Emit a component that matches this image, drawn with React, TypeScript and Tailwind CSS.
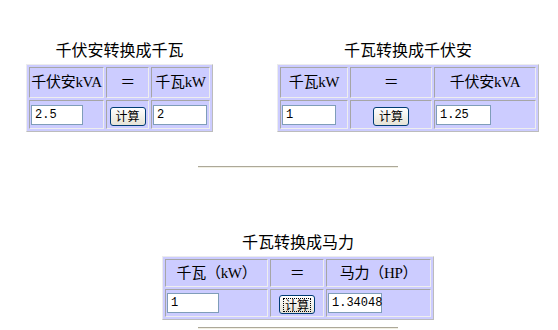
import React from 'react'

type Conv = {
  title: string
  left: string
  right: string
  a: string
  b: string
  table: string
  cols: [string, string, string]
  head: string
  row: string
  inA: string
  inB: string
  focused?: boolean
}

const serifCjk = 'font-["Liberation_Serif","Noto_Sans_CJK_SC",serif]'

function Btn({ focused }: { focused?: boolean }) {
  return (
    <button className='inline-flex h-[19px] w-[36px] items-center justify-center rounded-[3px] border border-[#003c74] bg-gradient-to-b from-white to-[#e6e3d6] align-middle font-["Noto_Sans_CJK_SC",sans-serif] text-[12px] leading-none text-black'>
      <span className={focused ? 'px-[1px] outline outline-1 outline-dotted outline-black' : ''}>计算</span>
    </button>
  )
}

function Field({ value, w }: { value: string; w: string }) {
  return (
    <div
      className={`flex h-[20px] items-center border border-[#7f9db9] bg-white pl-[3px] font-["Liberation_Mono","DejaVu_Sans_Mono",monospace] text-[12px] text-black ${w}`}
    >
      {value}
    </div>
  )
}

function Converter({ c }: { c: Conv }) {
  const cell = 'border border-t-[#a6a6a6] border-l-[#a6a6a6] border-b-[#eeeeee] border-r-[#eeeeee] p-[1px]'
  const head = `${cell} overflow-hidden whitespace-nowrap text-center text-[15px] tracking-[-0.3px] text-black ${serifCjk}`
  return (
    <div className="flex flex-col items-center">
      <div className={`mb-[4px] whitespace-nowrap text-[16px] leading-[18px] text-black ${serifCjk}`}>{c.title}</div>
      <table
        className={`table-fixed border-separate border-spacing-[2px] border border-t-[#ececec] border-l-[#ececec] border-b-[#bcbcbc] border-r-[#bcbcbc] bg-[#ccccff] ${c.table}`}
      >
        <colgroup>
          <col className={c.cols[0]} />
          <col className={c.cols[1]} />
          <col className={c.cols[2]} />
        </colgroup>
        <tbody>
          <tr className={c.head}>
            <td className={head}>{c.left}</td>
            <td className={head}>＝</td>
            <td className={head}>{c.right}</td>
          </tr>
          <tr className={c.row}>
            <td className={cell}>
              <Field value={c.a} w={c.inA} />
            </td>
            <td className={`${cell} text-center`}>
              <Btn focused={c.focused} />
            </td>
            <td className={cell}>
              <Field value={c.b} w={c.inB} />
            </td>
          </tr>
        </tbody>
      </table>
    </div>
  )
}

const kvaToKw: Conv = {
  title: '千伏安转换成千瓦',
  left: '千伏安kVA',
  right: '千瓦kW',
  a: '2.5',
  b: '2',
  table: 'w-[187px]',
  cols: ['w-[75px]', 'w-[43px]', 'w-[59px]'],
  head: 'h-[31px]',
  row: 'h-[29px]',
  inA: 'w-[52px]',
  inB: 'w-[54px]',
}

const kwToKva: Conv = {
  title: '千瓦转换成千伏安',
  left: '千瓦kW',
  right: '千伏安kVA',
  a: '1',
  b: '1.25',
  table: 'w-[262px]',
  cols: ['w-[68px]', 'w-[82px]', 'w-[102px]'],
  head: 'h-[31px]',
  row: 'h-[29px]',
  inA: 'w-[54px]',
  inB: 'w-[55px]',
}

const kwToHp: Conv = {
  title: '千瓦转换成马力',
  left: '千瓦（kW）',
  right: '马力（HP）',
  a: '1',
  b: '1.34048',
  table: 'w-[272px]',
  cols: ['w-[103px]', 'w-[54px]', 'w-[105px]'],
  head: 'h-[28px]',
  row: 'h-[27px]',
  inA: 'w-[52px]',
  inB: 'w-[54px]',
  focused: true,
}

function Rule() {
  return <div className="mx-auto h-[2px] w-[200px] border-t border-b border-t-[#aca899] border-b-[#f1efe2]" />
}

export default function App() {
  return (
    <div className="h-[330px] w-[558px] overflow-hidden bg-white">
      <div className="flex pt-[42px]">
        <div className="ml-[26px]">
          <Converter c={kvaToKw} />
        </div>
        <div className="ml-[64px]">
          <Converter c={kwToKva} />
        </div>
      </div>
      <div className="w-[596px] pt-[34px]">
        <Rule />
      </div>
      <div className="flex w-[596px] justify-center pt-[66px]">
        <Converter c={kwToHp} />
      </div>
      <div className="w-[596px] pt-[7px]">
        <Rule />
      </div>
    </div>
  )
}
